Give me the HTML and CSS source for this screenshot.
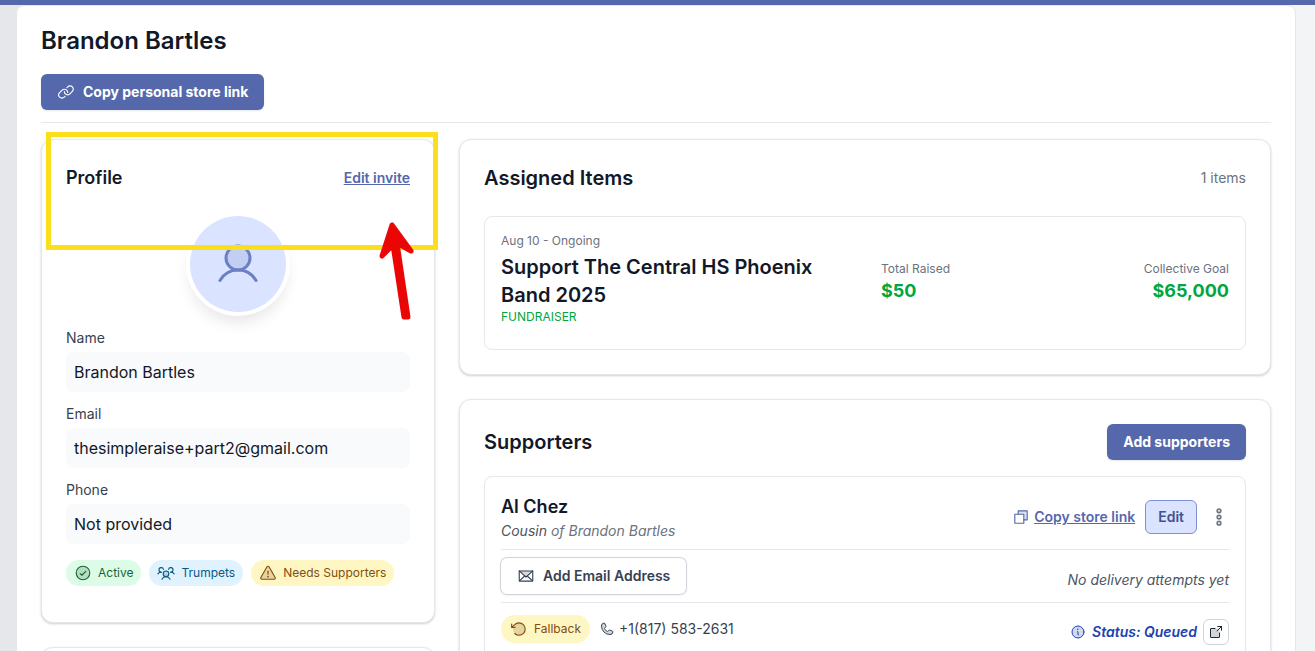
FILE: index.html
```html
<!DOCTYPE html>
<html lang="en">
<head>
    <meta charset="UTF-8">
    <meta name="viewport" content="width=device-width, initial-scale=1.0">
    <title>Brandon Bartles</title>
    <link rel="stylesheet" href="styles.css">
</head>
<body>

    <div class="top-bar"></div>
    <main class="page">
        <div class="panel">
            <header class="page-header">
                <h1>Brandon Bartles</h1>
                <button type="button" class="btn btn-primary">
                    <svg class="icon" viewBox="0 0 256 256"><path d="M141.38,64.68l11-11a46.62,46.62,0,0,1,65.94,0h0a46.62,46.62,0,0,1,0,65.94L193.94,144,183.6,154.34a46.63,46.63,0,0,1-66-.05h0A46.48,46.48,0,0,1,104,120.06"/><path d="M114.62,191.32l-11,11a46.63,46.63,0,0,1-66-.05h0a46.63,46.63,0,0,1,.06-65.89L72.4,101.66a46.62,46.62,0,0,1,65.94,0h0A46.45,46.45,0,0,1,152,135.94"/></svg>
                    Copy personal store link
                </button>
            </header>

            <div class="columns">
                <div class="side-column">
                    <section class="card profile">
                        <div class="card-header">
                            <h2 class="small-title">Profile</h2>
                            <a href="#" class="link">Edit invite</a>
                        </div>
                        <div class="avatar">
                            <svg class="icon" viewBox="0 0 256 256"><circle class="tone" cx="128" cy="96" r="64"/><circle cx="128" cy="96" r="64"/><path d="M32,216c19.37-33.47,54.55-56,96-56s76.63,22.53,96,56"/></svg>
                        </div>
                        <div class="form-group">
                            <label for="name">Name</label>
                            <input type="text" id="name" value="Brandon Bartles" readonly>
                        </div>
                        <div class="form-group">
                            <label for="email">Email</label>
                            <input type="text" id="email" value="thesimpleraise+part2@gmail.com" readonly>
                        </div>
                        <div class="form-group">
                            <label for="phone">Phone</label>
                            <input type="text" id="phone" value="Not provided" readonly>
                        </div>
                        <div class="badges">
                            <span class="badge badge-green">
                                <svg class="icon" viewBox="0 0 256 256"><circle class="tone" cx="128" cy="128" r="96"/><circle cx="128" cy="128" r="96"/><polyline points="88 136 112 160 168 104"/></svg>
                                Active
                            </span>
                            <span class="badge badge-blue">
                                <svg class="icon" viewBox="0 0 256 256"><circle class="tone" cx="128" cy="140" r="40"/><circle cx="128" cy="140" r="40"/><path d="M196,116a59.8,59.8,0,0,1,48,24"/><path d="M12,140a59.8,59.8,0,0,1,48-24"/><path d="M70.4,216a64.1,64.1,0,0,1,115.2,0"/><path d="M60,116A32,32,0,1,1,91.4,78"/><path d="M164.6,78A32,32,0,1,1,196,116"/></svg>
                                Trumpets
                            </span>
                            <span class="badge badge-yellow">
                                <svg class="icon" viewBox="0 0 256 256"><path class="tone" d="M142.41,40.22l87.46,151.87C236,202.79,228.08,216,215.46,216H40.54C27.92,216,20,202.79,26.13,192.09L113.59,40.22C119.89,29.26,136.11,29.26,142.41,40.22Z"/><path d="M142.41,40.22l87.46,151.87C236,202.79,228.08,216,215.46,216H40.54C27.92,216,20,202.79,26.13,192.09L113.59,40.22C119.89,29.26,136.11,29.26,142.41,40.22Z"/><path d="M128,144V104"/><circle class="dot" cx="128" cy="180" r="12"/></svg>
                                Needs Supporters
                            </span>
                        </div>

                        <div class="highlight"></div>
                        <svg class="arrow" viewBox="0 0 38 104"><polygon points="14 5 33 31 19 23 30 97 26 97 15 25 4 36"/></svg>
                    </section>
                    <section class="card next-card"></section>
                </div>

                <div class="main-column">
                    <section class="card">
                        <div class="card-header">
                            <h2>Assigned Items</h2>
                            <span class="count">1 items</span>
                        </div>
                        <div class="box item">
                            <div class="item-info">
                                <p class="caption item-date">Aug 10 - Ongoing</p>
                                <h3>Support The Central HS Phoenix Band 2025</h3>
                                <p class="caption item-type">FUNDRAISER</p>
                            </div>
                            <div class="item-totals">
                                <div>
                                    <p class="caption">Total Raised</p>
                                    <p class="amount">$50</p>
                                </div>
                                <div class="goal">
                                    <p class="caption">Collective Goal</p>
                                    <p class="amount">$65,000</p>
                                </div>
                            </div>
                        </div>
                    </section>

                    <section class="card">
                        <div class="card-header supporters-header">
                            <h2>Supporters</h2>
                            <button type="button" class="btn btn-primary">Add supporters</button>
                        </div>
                        <div class="box">
                            <div class="row supporter">
                                <div>
                                    <h3 class="small-title">Al Chez</h3>
                                    <p class="relation"><span>Cousin</span> of Brandon Bartles</p>
                                </div>
                                <div class="actions">
                                    <a href="#" class="link copy-link">
                                        <svg class="icon" viewBox="0 0 256 256"><polygon class="tone" points="216 40 216 168 168 168 168 88 88 88 88 40"/><polyline points="168 168 216 168 216 40 88 40 88 88"/><rect x="40" y="88" width="128" height="128"/></svg>
                                        <span>Copy store link</span>
                                    </a>
                                    <button type="button" class="btn btn-soft">Edit</button>
                                    <button type="button" class="btn-menu" aria-label="More options">
                                        <svg class="icon" viewBox="0 0 256 256"><circle class="tone" cx="128" cy="62" r="20"/><circle cx="128" cy="62" r="20"/><circle class="tone" cx="128" cy="128" r="20"/><circle cx="128" cy="128" r="20"/><circle class="tone" cx="128" cy="194" r="20"/><circle cx="128" cy="194" r="20"/></svg>
                                    </button>
                                </div>
                            </div>
                            <div class="row">
                                <button type="button" class="btn btn-outline">
                                    <svg class="icon" viewBox="0 0 256 256"><polygon class="tone" points="224 56 128 144 32 56"/><path d="M32,56H224V192a8,8,0,0,1-8,8H40a8,8,0,0,1-8-8Z"/><polyline points="224 56 128 144 32 56"/><path d="M110.55,128L34.47,197.74M221.53,197.74L145.45,128"/></svg>
                                    Add Email Address
                                </button>
                                <span class="delivery">No delivery attempts yet</span>
                            </div>
                            <div class="row contact">
                                <div class="phone">
                                    <span class="badge badge-yellow badge-tall">
                                        <svg class="icon" viewBox="0 0 256 256"><circle class="tone" cx="128" cy="128" r="88"/><polyline points="24 56 24 104 72 104"/><path d="M67.59,192A88,88,0,1,0,65.77,65.77L24,104"/></svg>
                                        Fallback
                                    </span>
                                    <svg class="icon" viewBox="0 0 256 256"><path class="tone" d="M164.39,145.34a8,8,0,0,1,7.59-.69l47.16,21.13a8,8,0,0,1,4.8,8.3A48.33,48.33,0,0,1,176,216,136,136,0,0,1,40,80,48.33,48.33,0,0,1,81.92,32.06a8,8,0,0,1,8.3,4.8l21.13,47.2a8,8,0,0,1-.66,7.53L89.32,117a7.93,7.93,0,0,0-.54,7.81c8.27,16.93,25.77,34.22,42.75,42.41a7.92,7.92,0,0,0,7.83-.59Z"/><path d="M164.39,145.34a8,8,0,0,1,7.59-.69l47.16,21.13a8,8,0,0,1,4.8,8.3A48.33,48.33,0,0,1,176,216,136,136,0,0,1,40,80,48.33,48.33,0,0,1,81.92,32.06a8,8,0,0,1,8.3,4.8l21.13,47.2a8,8,0,0,1-.66,7.53L89.32,117a7.93,7.93,0,0,0-.54,7.81c8.27,16.93,25.77,34.22,42.75,42.41a7.92,7.92,0,0,0,7.83-.59Z"/></svg>
                                    <span>+1(817) 583-2631</span>
                                </div>
                                <div class="status">
                                    <svg class="icon" viewBox="0 0 256 256"><circle class="tone" cx="128" cy="128" r="96"/><circle cx="128" cy="128" r="96"/><path d="M120,120a8,8,0,0,1,8,8v40a8,8,0,0,0,8,8"/><circle class="dot" cx="124" cy="84" r="12"/></svg>
                                    <span>Status: Queued</span>
                                    <button type="button" class="btn-open" aria-label="Open status">
                                        <svg class="icon" viewBox="0 0 256 256"><path class="tone" d="M184,72V208a8,8,0,0,1-8,8H48a8,8,0,0,1-8-8V80a8,8,0,0,1,8-8Z"/><polyline points="216 100 216 40 156 40"/><path d="M144,112L216,40"/><path d="M184,144v64a8,8,0,0,1-8,8H48a8,8,0,0,1-8-8V80a8,8,0,0,1,8-8h64"/></svg>
                                    </button>
                                </div>
                            </div>
                        </div>
                    </section>
                </div>
            </div>
        </div>
    </main>

</body>
</html>
```
FILE: styles.css
```css
* {
    box-sizing: border-box;
}

body {
    font-family: Inter, "Liberation Sans", sans-serif;
    font-size: 14px;
    line-height: 20px;
    margin: 0;
    height: 100vh;
    overflow: hidden;
    background-color: #f3f4f6;
    color: #374151;
}

h1, h2, h3, p {
    margin: 0;
}

h1, h2, h3 {
    color: #111827;
    font-weight: 600;
}

h1 {
    font-size: 24px;
    line-height: 38px;
}

h2, h3 {
    font-size: 20px;
    line-height: 28px;
}

.small-title {
    font-size: 18px;
}

button {
    font-family: inherit;
    cursor: pointer;
}

.top-bar {
    height: 5px;
    background-color: #5568ac;
}

.page {
    border-left: 16px solid #e5e7eb;
    padding-right: 19px;
    background: linear-gradient(to right, #e5e7eb 50%, #f3f4f6 50%);
}

.panel {
    background-color: #fff;
    border: 1px solid #e5e7eb;
    border-radius: 8px;
    padding: 16px 24px 24px;
}

.page-header {
    border-bottom: 1px solid #e5e7eb;
    padding-bottom: 12px;
    margin-bottom: 16px;
}

.page-header h1 {
    margin-bottom: 14px;
}

.columns {
    display: grid;
    grid-template-columns: repeat(3, minmax(0, 1fr));
    gap: 24px;
}

.side-column, .main-column {
    display: flex;
    flex-direction: column;
    gap: 24px;
}

.main-column {
    grid-column: span 2;
}

.card {
    background-color: #fff;
    border: 1px solid #e5e7eb;
    border-radius: 12px;
    box-shadow: 0 1px 3px rgba(0, 0, 0, 0.1), 0 1px 2px rgba(0, 0, 0, 0.1);
    padding: 24px;
}

.card-header {
    display: flex;
    justify-content: space-between;
    align-items: center;
    margin-bottom: 24px;
}

.supporters-header {
    margin-bottom: 16px;
}

.box {
    border: 1px solid #e5e7eb;
    border-radius: 8px;
    padding: 16px;
}

/* Icons */
.icon {
    width: 18px;
    height: 18px;
    flex: none;
    fill: none;
    stroke: currentColor;
    stroke-width: 16;
    stroke-linecap: round;
    stroke-linejoin: round;
}

.icon .tone {
    fill: currentColor;
    stroke: none;
    opacity: 0.2;
}

.icon .dot {
    fill: currentColor;
    stroke: none;
}

/* Buttons and links */
.btn {
    display: inline-flex;
    align-items: center;
    gap: 8px;
    height: 36px;
    padding: 0 16px;
    border: none;
    border-radius: 6px;
    font-size: 14px;
    line-height: 20px;
    font-weight: 600;
}

.btn-primary {
    background-color: #5568ac;
    color: #fff;
    font-weight: 700;
    box-shadow: 0 1px 2px rgba(0, 0, 0, 0.1);
}

.btn-soft {
    height: 34px;
    padding: 0 12px;
    background-color: #dae3ff;
    border: 1px solid #7c90d6;
    color: #435390;
}

.btn-outline {
    background-color: #fff;
    color: #374151;
    box-shadow: 0 0 0 1px #d1d5db, 0 1px 3px rgba(0, 0, 0, 0.1);
}

.btn-menu {
    display: flex;
    padding: 0;
    border: none;
    background: none;
    color: #6b7280;
}

.btn-menu .icon {
    width: 24px;
    height: 24px;
}

.btn-open {
    display: flex;
    padding: 4px;
    background-color: #fff;
    border: 1px solid #d1d5db;
    border-radius: 6px;
    color: #1f2937;
}

.link {
    color: #5568ac;
    font-weight: 600;
    text-decoration: underline;
}

/* Profile */
.profile {
    position: relative;
    padding-bottom: 36px;
}

.avatar {
    display: flex;
    align-items: center;
    justify-content: center;
    width: 96px;
    height: 96px;
    margin: 0 auto 16px;
    border-radius: 50%;
    background-color: #dae3ff;
    color: #6b7fc4;
    box-shadow: 0 0 0 4px #fff, 0 10px 15px rgba(0, 0, 0, 0.1);
}

.avatar .icon {
    width: 48px;
    height: 48px;
}

.form-group {
    margin-bottom: 12px;
}

.form-group label {
    display: block;
    margin-bottom: 4px;
}

.form-group input {
    display: block;
    width: 100%;
    height: 40px;
    padding: 8px;
    border: none;
    border-radius: 8px;
    background-color: #f9fafb;
    color: #111827;
    font-family: inherit;
    font-size: 16px;
}

.badges {
    display: flex;
    flex-wrap: wrap;
    gap: 8px;
    margin-top: 16px;
}

.badge {
    display: inline-flex;
    align-items: center;
    gap: 6px;
    height: 26px;
    padding: 0 8px;
    border-radius: 14px;
    font-size: 12px;
    line-height: 16px;
}

.badge-tall {
    height: 28px;
    padding: 0 9px;
}

.badge-green {
    background-color: #dcfce7;
    color: #166534;
}

.badge-blue {
    background-color: #e0f2fe;
    color: #075985;
}

.badge-yellow {
    background-color: #fef7c3;
    color: #854d0e;
}

.next-card {
    min-height: 100px;
}

/* Callout drawn over the profile card */
.highlight {
    position: absolute;
    top: -8px;
    left: 4px;
    right: -4px;
    height: 118px;
    border: 5px solid #fcdf1c;
}

.arrow {
    position: absolute;
    top: 80px;
    right: 18px;
    width: 38px;
    height: 104px;
    fill: #eb0606;
    stroke: #eb0606;
    stroke-width: 5;
    stroke-linejoin: round;
}

/* Assigned items */
.count {
    color: #6b7280;
}

.caption {
    font-size: 12px;
    line-height: 16px;
    color: #6b7280;
}

.item {
    display: grid;
    grid-template-columns: 1fr 1fr;
    gap: 32px;
    align-items: center;
}

.item-info {
    padding-bottom: 8px;
}

.item-date {
    margin-bottom: 4px;
}

.item-type, .amount {
    color: #00a63e;
}

.item-totals {
    display: flex;
    justify-content: space-between;
}

.goal {
    text-align: right;
}

.amount {
    font-size: 18px;
    line-height: 28px;
    font-weight: 700;
}

/* Supporters */
.row {
    display: flex;
    justify-content: space-between;
    align-items: center;
    padding: 8px 0;
    border-bottom: 1px solid #e5e7eb;
}

.supporter {
    padding-top: 0;
}

.relation {
    font-style: italic;
    color: #6b7280;
}

.relation span {
    color: #4b5563;
}

.actions {
    display: flex;
    align-items: center;
    gap: 10px;
}

.actions .btn-menu {
    margin-right: -2px;
}

.copy-link {
    display: flex;
    align-items: center;
    gap: 4px;
    text-decoration: none;
}

.copy-link span {
    text-decoration: underline;
}

.delivery {
    padding-top: 8px;
    font-style: italic;
    color: #4b5563;
}

.contact {
    border-bottom: none;
    align-items: flex-start;
    padding-top: 12px;
}

.phone {
    display: flex;
    align-items: center;
}

.phone .badge {
    margin-right: 9px;
}

.phone > .icon {
    width: 16px;
    height: 16px;
    margin-right: 4px;
}

.status {
    display: flex;
    align-items: center;
    gap: 6px;
    padding-top: 4px;
    font-style: italic;
    font-weight: 600;
    color: #1e40af;
}

.status > .icon {
    width: 16px;
    height: 16px;
}

.btn-open .icon {
    width: 16px;
    height: 16px;
}
```
